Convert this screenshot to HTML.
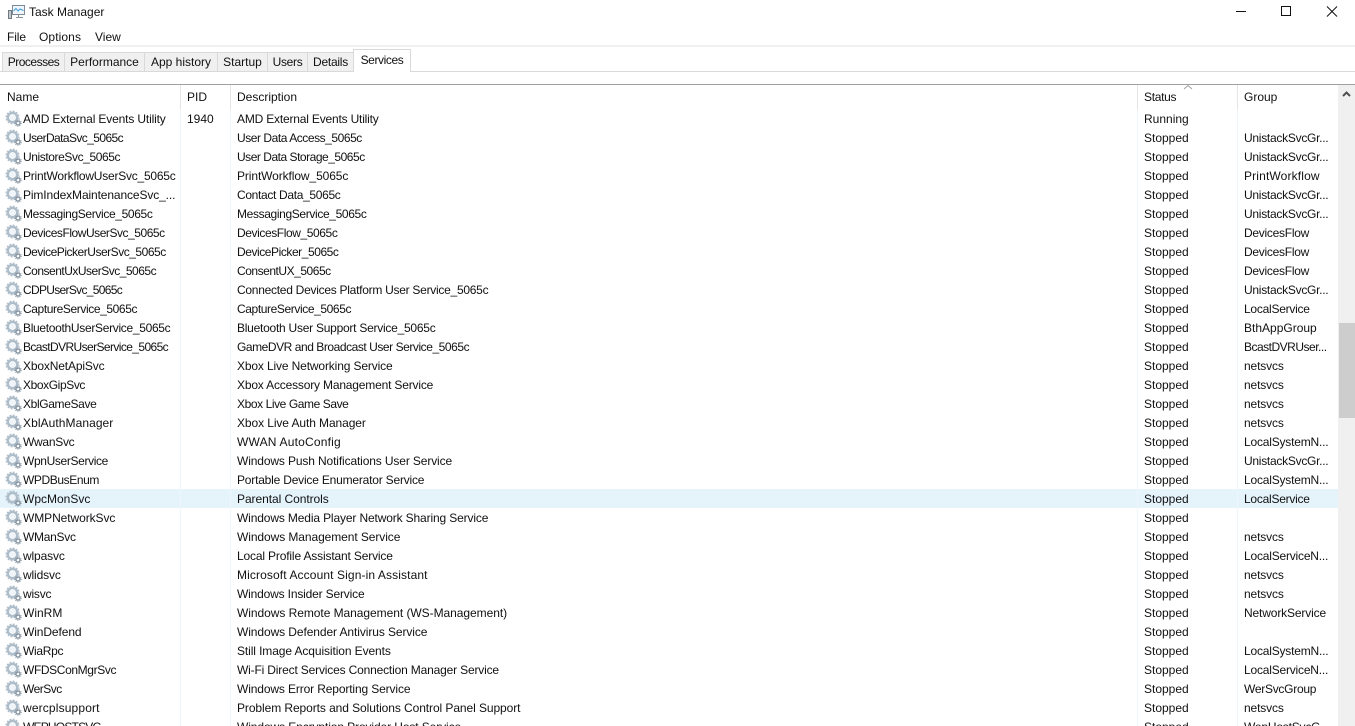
<!DOCTYPE html>
<html><head><meta charset="utf-8"><title>Task Manager</title>
<style>
html,body{margin:0;padding:0;background:#fff;width:1355px;height:726px;overflow:hidden}
body{position:relative;font-family:"Liberation Sans",sans-serif;font-size:12px;color:#111}
.a{position:absolute;white-space:nowrap;line-height:16px}
.line{position:absolute}
.tab{position:absolute;top:52px;height:19px;background:#f0f0f0;border:1px solid #d9d9d9;border-bottom:none;box-sizing:border-box;text-align:center;line-height:19px;white-space:nowrap}
#t{position:absolute;left:0;top:109px;width:1338px;height:617px;overflow:hidden}
.r{position:relative;height:19px;line-height:19px;white-space:nowrap}
.r span{position:absolute;top:1px;white-space:nowrap}
.r svg{position:absolute;left:5px;top:1px;width:17px;height:17px}
.n{left:23px}.p{left:187px}.d{left:237px}.s{left:1144px}.g{left:1244px;letter-spacing:-.2px}
.sel{background:#e5f3fb}
</style></head><body>
<svg width="0" height="0" style="position:absolute"><defs>
<symbol id="gear" viewBox="0 0 17 17">
<circle cx="7.5" cy="7.5" r="4.6" fill="none" stroke="#aebdca" stroke-width="2.4"/>
<circle cx="7.5" cy="7.5" r="6.2" fill="none" stroke="#b3c0cc" stroke-width="1.6" stroke-dasharray="1.9 1.35"/>
<circle cx="7.5" cy="7.5" r="2.6" fill="#eef4fa"/>
<circle cx="13" cy="13" r="2" fill="none" stroke="#84929f" stroke-width="1.3"/>
<circle cx="13" cy="13" r="3.2" fill="none" stroke="#98a6b2" stroke-width="1.1" stroke-dasharray="1.2 1"/>
</symbol></defs></svg>

<svg class="line" style="left:8px;top:4px" width="17" height="16" viewBox="0 0 17 16">
<rect x="4.5" y="1.5" width="12" height="9" fill="#eef5fb" stroke="#7f8c97"/>
<path d="M5.5 7 L8 4.5 L10 7 L12 5 L15.5 6.5" fill="none" stroke="#3f9bd8" stroke-width="1"/>
<path d="M8 13.5H15M10.5 11V13" stroke="#8a949c" fill="none"/>
<rect x="0.5" y="6.5" width="3" height="8" fill="#c2c8cd" stroke="#6f7a83"/>
</svg>
<div class="a" style="left:29px;top:4px">Task Manager</div>
<div class="a" style="left:7px;top:29px;letter-spacing:-.1px">File</div>
<div class="a" style="left:39px;top:29px;letter-spacing:.1px">Options</div>
<div class="a" style="left:95px;top:29px">View</div>

<svg class="line" style="left:1230px;top:0" width="125" height="24" viewBox="0 0 125 24">
<path d="M6 11.5H16" stroke="#111" fill="none"/>
<rect x="51.5" y="6.5" width="9" height="9" fill="none" stroke="#111"/>
<path d="M97 6.5L107 16.5M107 6.5L97 16.5" stroke="#111" fill="none"/>
</svg>

<div class="line" style="left:0;top:45px;width:1355px;height:2px;background:#f0f0f0"></div>
<div class="line" style="left:0;top:71px;width:1355px;height:1px;background:#d9d9d9"></div>
<div class="tab" style="left:2px;width:63px;letter-spacing:-.5px">Processes</div>
<div class="tab" style="left:64px;width:81px">Performance</div>
<div class="tab" style="left:144px;width:74px">App history</div>
<div class="tab" style="left:217px;width:51px">Startup</div>
<div class="tab" style="left:267px;width:41px;letter-spacing:-.3px">Users</div>
<div class="tab" style="left:307px;width:47px;letter-spacing:-.25px">Details</div>
<div class="tab" style="left:353px;top:49px;width:58px;height:23px;background:#fff;line-height:21px;letter-spacing:-.4px">Services</div>

<div class="line" style="left:0;top:84px;width:1355px;height:1px;background:#a0a0a0"></div>
<div class="a" style="left:7px;top:89px">Name</div>
<div class="a" style="left:187px;top:89px">PID</div>
<div class="a" style="left:237px;top:89px">Description</div>
<div class="a" style="left:1144px;top:89px;letter-spacing:-.3px">Status</div>
<div class="a" style="left:1244px;top:89px">Group</div>
<svg class="line" style="left:1183px;top:84px" width="10" height="6" viewBox="0 0 10 6"><path d="M1 5L5 1.5L9 5" fill="none" stroke="#a0a0a0"/></svg>

<div id="t">
<div class="r"><svg><use href="#gear"/></svg><span class="n" style="letter-spacing:-.15px">AMD External Events Utility</span><span class="p">1940</span><span class="d" style="letter-spacing:-.19px">AMD External Events Utility</span><span class="s">Running</span></div>
<div class="r"><svg><use href="#gear"/></svg><span class="n" style="letter-spacing:-.59px">UserDataSvc_5065c</span><span class="d" style="letter-spacing:-.45px">User Data Access_5065c</span><span class="s">Stopped</span><span class="g" style="letter-spacing:-.27px">UnistackSvcGr...</span></div>
<div class="r"><svg><use href="#gear"/></svg><span class="n" style="letter-spacing:-.41px">UnistoreSvc_5065c</span><span class="d" style="letter-spacing:-.48px">User Data Storage_5065c</span><span class="s">Stopped</span><span class="g" style="letter-spacing:-.27px">UnistackSvcGr...</span></div>
<div class="r"><svg><use href="#gear"/></svg><span class="n" style="letter-spacing:-.23px">PrintWorkflowUserSvc_5065c</span><span class="d" style="letter-spacing:-.1px">PrintWorkflow_5065c</span><span class="s">Stopped</span><span class="g" style="letter-spacing:.15px">PrintWorkflow</span></div>
<div class="r"><svg><use href="#gear"/></svg><span class="n" style="letter-spacing:-.12px">PimIndexMaintenanceSvc_...</span><span class="d" style="letter-spacing:-.33px">Contact Data_5065c</span><span class="s">Stopped</span><span class="g" style="letter-spacing:-.27px">UnistackSvcGr...</span></div>
<div class="r"><svg><use href="#gear"/></svg><span class="n" style="letter-spacing:-.36px">MessagingService_5065c</span><span class="d" style="letter-spacing:-.36px">MessagingService_5065c</span><span class="s">Stopped</span><span class="g" style="letter-spacing:-.27px">UnistackSvcGr...</span></div>
<div class="r"><svg><use href="#gear"/></svg><span class="n" style="letter-spacing:-.46px">DevicesFlowUserSvc_5065c</span><span class="d" style="letter-spacing:-.41px">DevicesFlow_5065c</span><span class="s">Stopped</span><span class="g" style="letter-spacing:-.27px">DevicesFlow</span></div>
<div class="r"><svg><use href="#gear"/></svg><span class="n" style="letter-spacing:-.48px">DevicePickerUserSvc_5065c</span><span class="d" style="letter-spacing:-.44px">DevicePicker_5065c</span><span class="s">Stopped</span><span class="g" style="letter-spacing:-.27px">DevicesFlow</span></div>
<div class="r"><svg><use href="#gear"/></svg><span class="n" style="letter-spacing:-.5px">ConsentUxUserSvc_5065c</span><span class="d" style="letter-spacing:-.47px">ConsentUX_5065c</span><span class="s">Stopped</span><span class="g" style="letter-spacing:-.27px">DevicesFlow</span></div>
<div class="r"><svg><use href="#gear"/></svg><span class="n" style="letter-spacing:-.69px">CDPUserSvc_5065c</span><span class="d" style="letter-spacing:-.27px">Connected Devices Platform User Service_5065c</span><span class="s">Stopped</span><span class="g" style="letter-spacing:-.27px">UnistackSvcGr...</span></div>
<div class="r"><svg><use href="#gear"/></svg><span class="n" style="letter-spacing:-.4px">CaptureService_5065c</span><span class="d" style="letter-spacing:-.4px">CaptureService_5065c</span><span class="s">Stopped</span><span class="g" style="letter-spacing:-.25px">LocalService</span></div>
<div class="r"><svg><use href="#gear"/></svg><span class="n" style="letter-spacing:-.31px">BluetoothUserService_5065c</span><span class="d" style="letter-spacing:-.25px">Bluetooth User Support Service_5065c</span><span class="s">Stopped</span><span class="g" style="letter-spacing:0">BthAppGroup</span></div>
<div class="r"><svg><use href="#gear"/></svg><span class="n" style="letter-spacing:-.6px">BcastDVRUserService_5065c</span><span class="d" style="letter-spacing:-.45px">GameDVR and Broadcast User Service_5065c</span><span class="s">Stopped</span><span class="g" style="letter-spacing:-.5px">BcastDVRUser...</span></div>
<div class="r"><svg><use href="#gear"/></svg><span class="n" style="letter-spacing:-.15px">XboxNetApiSvc</span><span class="d" style="letter-spacing:-.14px">Xbox Live Networking Service</span><span class="s">Stopped</span><span class="g" style="letter-spacing:-.14px">netsvcs</span></div>
<div class="r"><svg><use href="#gear"/></svg><span class="n" style="letter-spacing:-.4px">XboxGipSvc</span><span class="d" style="letter-spacing:-.18px">Xbox Accessory Management Service</span><span class="s">Stopped</span><span class="g" style="letter-spacing:-.14px">netsvcs</span></div>
<div class="r"><svg><use href="#gear"/></svg><span class="n" style="letter-spacing:-.36px">XblGameSave</span><span class="d" style="letter-spacing:-.42px">Xbox Live Game Save</span><span class="s">Stopped</span><span class="g" style="letter-spacing:-.14px">netsvcs</span></div>
<div class="r"><svg><use href="#gear"/></svg><span class="n" style="letter-spacing:.07px">XblAuthManager</span><span class="d" style="letter-spacing:-.09px">Xbox Live Auth Manager</span><span class="s">Stopped</span><span class="g" style="letter-spacing:-.14px">netsvcs</span></div>
<div class="r"><svg><use href="#gear"/></svg><span class="n" style="letter-spacing:-.28px">WwanSvc</span><span class="d" style="letter-spacing:.2px">WWAN AutoConfig</span><span class="s">Stopped</span><span class="g">LocalSystemN...</span></div>
<div class="r"><svg><use href="#gear"/></svg><span class="n" style="letter-spacing:-.36px">WpnUserService</span><span class="d" style="letter-spacing:-.13px">Windows Push Notifications User Service</span><span class="s">Stopped</span><span class="g" style="letter-spacing:-.27px">UnistackSvcGr...</span></div>
<div class="r"><svg><use href="#gear"/></svg><span class="n" style="letter-spacing:-.4px">WPDBusEnum</span><span class="d" style="letter-spacing:-.2px">Portable Device Enumerator Service</span><span class="s">Stopped</span><span class="g">LocalSystemN...</span></div>
<div class="r sel"><svg><use href="#gear"/></svg><span class="n">WpcMonSvc</span><span class="d" style="letter-spacing:-.06px">Parental Controls</span><span class="s">Stopped</span><span class="g" style="letter-spacing:-.25px">LocalService</span></div>
<div class="r"><svg><use href="#gear"/></svg><span class="n" style="letter-spacing:-.08px">WMPNetworkSvc</span><span class="d" style="letter-spacing:-.14px">Windows Media Player Network Sharing Service</span><span class="s">Stopped</span></div>
<div class="r"><svg><use href="#gear"/></svg><span class="n" style="letter-spacing:-.28px">WManSvc</span><span class="d" style="letter-spacing:-.08px">Windows Management Service</span><span class="s">Stopped</span><span class="g" style="letter-spacing:-.14px">netsvcs</span></div>
<div class="r"><svg><use href="#gear"/></svg><span class="n" style="letter-spacing:-.14px">wlpasvc</span><span class="d" style="letter-spacing:-.16px">Local Profile Assistant Service</span><span class="s">Stopped</span><span class="g">LocalServiceN...</span></div>
<div class="r"><svg><use href="#gear"/></svg><span class="n" style="letter-spacing:-.14px">wlidsvc</span><span class="d" style="letter-spacing:.11px">Microsoft Account Sign-in Assistant</span><span class="s">Stopped</span><span class="g" style="letter-spacing:-.14px">netsvcs</span></div>
<div class="r"><svg><use href="#gear"/></svg><span class="n" style="letter-spacing:-.2px">wisvc</span><span class="d" style="letter-spacing:-.17px">Windows Insider Service</span><span class="s">Stopped</span><span class="g" style="letter-spacing:-.14px">netsvcs</span></div>
<div class="r"><svg><use href="#gear"/></svg><span class="n">WinRM</span><span class="d" style="letter-spacing:-.05px">Windows Remote Management (WS-Management)</span><span class="s">Stopped</span><span class="g" style="letter-spacing:-.14px">NetworkService</span></div>
<div class="r"><svg><use href="#gear"/></svg><span class="n" style="letter-spacing:-.1px">WinDefend</span><span class="d" style="letter-spacing:-.09px">Windows Defender Antivirus Service</span><span class="s">Stopped</span></div>
<div class="r"><svg><use href="#gear"/></svg><span class="n" style="letter-spacing:-.3px">WiaRpc</span><span class="d" style="letter-spacing:-.1px">Still Image Acquisition Events</span><span class="s">Stopped</span><span class="g">LocalSystemN...</span></div>
<div class="r"><svg><use href="#gear"/></svg><span class="n" style="letter-spacing:-.38px">WFDSConMgrSvc</span><span class="d" style="letter-spacing:-.17px">Wi-Fi Direct Services Connection Manager Service</span><span class="s">Stopped</span><span class="g">LocalServiceN...</span></div>
<div class="r"><svg><use href="#gear"/></svg><span class="n" style="letter-spacing:-.5px">WerSvc</span><span class="d" style="letter-spacing:-.13px">Windows Error Reporting Service</span><span class="s">Stopped</span><span class="g" style="letter-spacing:-.27px">WerSvcGroup</span></div>
<div class="r"><svg><use href="#gear"/></svg><span class="n" style="letter-spacing:.15px">wercplsupport</span><span class="d" style="letter-spacing:-.08px">Problem Reports and Solutions Control Panel Support</span><span class="s">Stopped</span><span class="g" style="letter-spacing:-.14px">netsvcs</span></div>
<div class="r"><svg><use href="#gear"/></svg><span class="n" style="letter-spacing:-.8px">WEPHOSTSVC</span><span class="d" style="letter-spacing:-.1px">Windows Encryption Provider Host Service</span><span class="s">Stopped</span><span class="g">WepHostSvcG...</span></div>
</div>

<div class="line" style="left:180px;top:85px;width:1px;height:641px;background:#eef5fb"></div>
<div class="line" style="left:230px;top:85px;width:1px;height:641px;background:#eef5fb"></div>
<div class="line" style="left:1137px;top:85px;width:1px;height:641px;background:#eef5fb"></div>
<div class="line" style="left:1237px;top:85px;width:1px;height:641px;background:#eef5fb"></div>
<div class="line" style="left:180px;top:85px;width:1px;height:24px;background:#e5e5e5"></div>
<div class="line" style="left:230px;top:85px;width:1px;height:24px;background:#e5e5e5"></div>
<div class="line" style="left:1137px;top:85px;width:1px;height:24px;background:#e5e5e5"></div>
<div class="line" style="left:1237px;top:85px;width:1px;height:24px;background:#e5e5e5"></div>

<div class="line" style="left:1338px;top:85px;width:17px;height:641px;background:#f0f0f0"></div>
<div class="line" style="left:1339px;top:323px;width:16px;height:95px;background:#cdcdcd"></div>
<svg class="line" style="left:1341px;top:90px" width="11" height="8" viewBox="0 0 11 8"><path d="M2 6L5.5 2.5L9 6" fill="none" stroke="#505050" stroke-width="2"/></svg>
</body></html>
